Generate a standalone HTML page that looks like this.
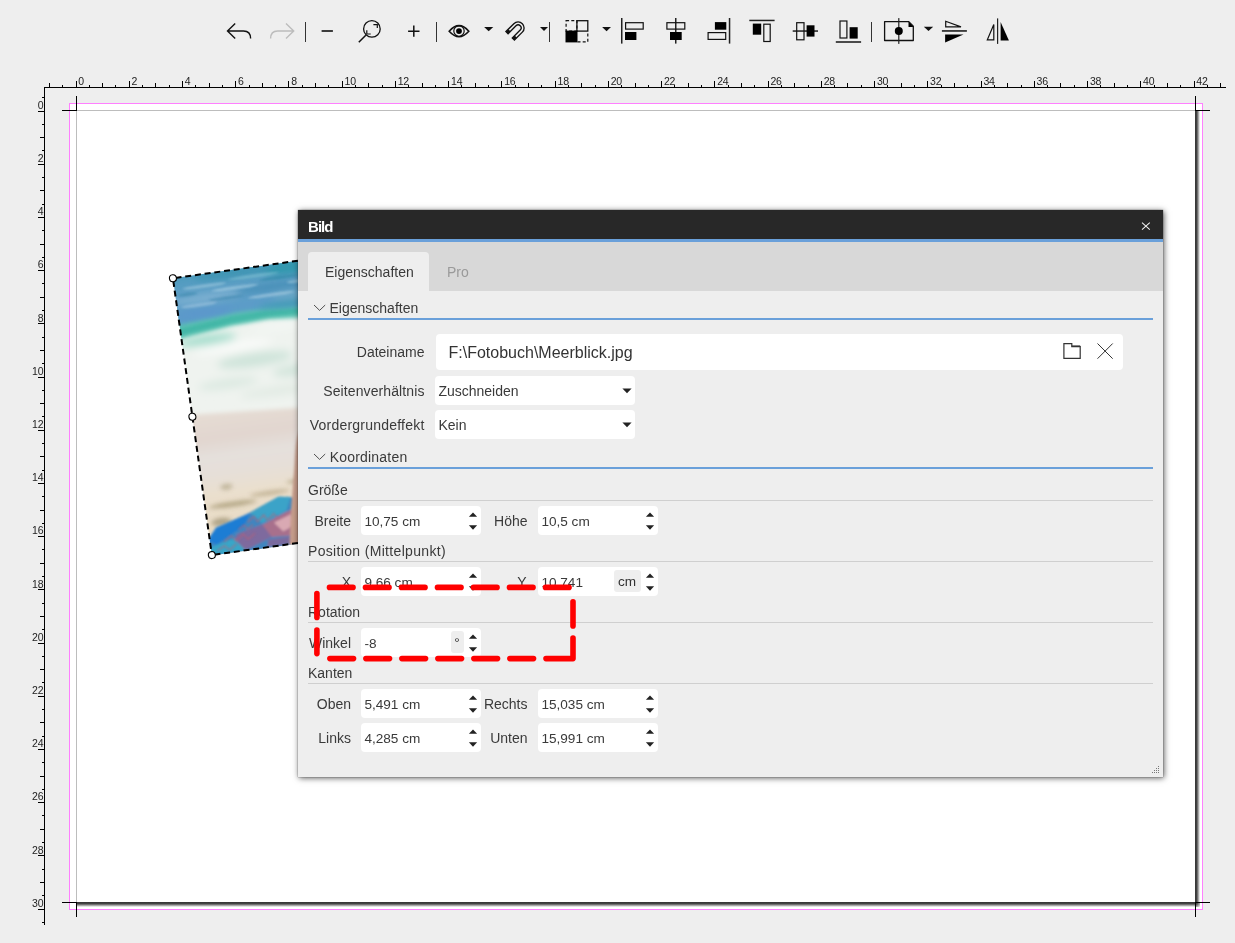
<!DOCTYPE html>
<html lang="de"><head><meta charset="utf-8"><title>Bild</title><style>
*{box-sizing:border-box;margin:0;padding:0}
html,body{width:1235px;height:943px;overflow:hidden;background:#eeeeee;font-family:"Liberation Sans",sans-serif;color:#333}
.abs{position:absolute}
#stage{position:absolute;left:0;top:0;width:1235px;height:943px;overflow:hidden;will-change:transform}
svg{position:absolute;left:0;top:0;overflow:visible}
.rl{font-family:"Liberation Sans",sans-serif;font-size:10.5px;fill:#222;letter-spacing:-0.2px}
#bleed{position:absolute;left:69px;top:103px;width:1134px;height:807px;background:#fff;border:1px solid #ff80ff}
#page{position:absolute;left:76px;top:110px;width:1119px;height:792px;background:#fff;border-left:1px solid #bdbdbd;border-top:1px solid #bdbdbd}
#shR{position:absolute;left:1195px;top:111px;width:5px;height:791px;background:linear-gradient(90deg,#333 0,#444 35%,#fff 100%)}
#shC{position:absolute;left:1195px;top:902px;width:5px;height:5px;background:radial-gradient(circle at 0 0,#333 0,#444 35%,#fff 100%)}
#shB{position:absolute;left:77px;top:902px;width:1118px;height:5px;background:linear-gradient(180deg,#333 0,#444 35%,#fff 100%)}
#dlg{position:absolute;left:298px;top:210px;width:865px;height:567px;background:#eeeeee;box-shadow:1px 1px 6px rgba(0,0,0,.65),0 0 1px rgba(0,0,0,.6)}
#dlg .title{position:absolute;left:0;top:0;width:865px;height:29px;background:#282828}
#dlg .title b{position:absolute;left:10px;top:8.6px;font-size:15px;line-height:16px;color:#fff;letter-spacing:-0.95px}
#dlg .blue{position:absolute;left:0;top:29px;width:865px;height:3px;background:#6aa0da}
#dlg .tabs{position:absolute;left:0;top:32px;width:865px;height:49px;background:#d8d8d8}
#dlg .tab{position:absolute;left:10px;top:42px;width:121px;height:39px;background:#eeeeee;border-radius:4px 4px 0 0}
.t14{font-size:14px;line-height:16px;white-space:nowrap;position:absolute;color:#3a3a3a}
.sec{position:absolute;left:10px;width:845px;height:2px;background:#6aa0da}
.grp{position:absolute;left:10px;width:845px;height:1px;background:#cfcfcf}
.inp{position:absolute;background:#fff;border-radius:4px}
.lab{position:absolute;font-size:14px;line-height:16px;text-align:right;white-space:nowrap;color:#3a3a3a}
.val{position:absolute;font-size:13.6px;line-height:16px;white-space:nowrap;color:#3a3a3a;left:3.4px}
.badge{position:absolute;background:#eeeeee;border-radius:3px;font-size:13.6px;line-height:16px;text-align:center;color:#333}
</style></head><body><div id="stage">
<div id="bleed"></div><div id="page"></div><div id="shR"></div><div id="shB"></div><div id="shC"></div>
<svg width="1235" height="943" viewBox="0 0 1235 943" shape-rendering="crispEdges"><rect x="44" y="87" width="1182" height="1" fill="#000"/><rect x="44" y="87" width="1" height="838" fill="#000"/><rect x="49" y="83" width="1" height="4" fill="#000"/><rect x="62" y="85" width="1" height="2" fill="#000"/><rect x="76" y="81" width="1" height="6" fill="#000"/><rect x="89" y="85" width="1" height="2" fill="#000"/><rect x="102" y="83" width="1" height="4" fill="#000"/><rect x="115" y="85" width="1" height="2" fill="#000"/><rect x="129" y="81" width="1" height="6" fill="#000"/><rect x="142" y="85" width="1" height="2" fill="#000"/><rect x="155" y="83" width="1" height="4" fill="#000"/><rect x="169" y="85" width="1" height="2" fill="#000"/><rect x="182" y="81" width="1" height="6" fill="#000"/><rect x="195" y="85" width="1" height="2" fill="#000"/><rect x="209" y="83" width="1" height="4" fill="#000"/><rect x="222" y="85" width="1" height="2" fill="#000"/><rect x="235" y="81" width="1" height="6" fill="#000"/><rect x="249" y="85" width="1" height="2" fill="#000"/><rect x="262" y="83" width="1" height="4" fill="#000"/><rect x="275" y="85" width="1" height="2" fill="#000"/><rect x="288" y="81" width="1" height="6" fill="#000"/><rect x="302" y="85" width="1" height="2" fill="#000"/><rect x="315" y="83" width="1" height="4" fill="#000"/><rect x="328" y="85" width="1" height="2" fill="#000"/><rect x="342" y="81" width="1" height="6" fill="#000"/><rect x="355" y="85" width="1" height="2" fill="#000"/><rect x="368" y="83" width="1" height="4" fill="#000"/><rect x="382" y="85" width="1" height="2" fill="#000"/><rect x="395" y="81" width="1" height="6" fill="#000"/><rect x="408" y="85" width="1" height="2" fill="#000"/><rect x="422" y="83" width="1" height="4" fill="#000"/><rect x="435" y="85" width="1" height="2" fill="#000"/><rect x="448" y="81" width="1" height="6" fill="#000"/><rect x="461" y="85" width="1" height="2" fill="#000"/><rect x="475" y="83" width="1" height="4" fill="#000"/><rect x="488" y="85" width="1" height="2" fill="#000"/><rect x="501" y="81" width="1" height="6" fill="#000"/><rect x="515" y="85" width="1" height="2" fill="#000"/><rect x="528" y="83" width="1" height="4" fill="#000"/><rect x="541" y="85" width="1" height="2" fill="#000"/><rect x="555" y="81" width="1" height="6" fill="#000"/><rect x="568" y="85" width="1" height="2" fill="#000"/><rect x="581" y="83" width="1" height="4" fill="#000"/><rect x="595" y="85" width="1" height="2" fill="#000"/><rect x="608" y="81" width="1" height="6" fill="#000"/><rect x="621" y="85" width="1" height="2" fill="#000"/><rect x="635" y="83" width="1" height="4" fill="#000"/><rect x="648" y="85" width="1" height="2" fill="#000"/><rect x="661" y="81" width="1" height="6" fill="#000"/><rect x="674" y="85" width="1" height="2" fill="#000"/><rect x="688" y="83" width="1" height="4" fill="#000"/><rect x="701" y="85" width="1" height="2" fill="#000"/><rect x="714" y="81" width="1" height="6" fill="#000"/><rect x="728" y="85" width="1" height="2" fill="#000"/><rect x="741" y="83" width="1" height="4" fill="#000"/><rect x="754" y="85" width="1" height="2" fill="#000"/><rect x="768" y="81" width="1" height="6" fill="#000"/><rect x="781" y="85" width="1" height="2" fill="#000"/><rect x="794" y="83" width="1" height="4" fill="#000"/><rect x="808" y="85" width="1" height="2" fill="#000"/><rect x="821" y="81" width="1" height="6" fill="#000"/><rect x="834" y="85" width="1" height="2" fill="#000"/><rect x="847" y="83" width="1" height="4" fill="#000"/><rect x="861" y="85" width="1" height="2" fill="#000"/><rect x="874" y="81" width="1" height="6" fill="#000"/><rect x="887" y="85" width="1" height="2" fill="#000"/><rect x="901" y="83" width="1" height="4" fill="#000"/><rect x="914" y="85" width="1" height="2" fill="#000"/><rect x="927" y="81" width="1" height="6" fill="#000"/><rect x="941" y="85" width="1" height="2" fill="#000"/><rect x="954" y="83" width="1" height="4" fill="#000"/><rect x="967" y="85" width="1" height="2" fill="#000"/><rect x="981" y="81" width="1" height="6" fill="#000"/><rect x="994" y="85" width="1" height="2" fill="#000"/><rect x="1007" y="83" width="1" height="4" fill="#000"/><rect x="1021" y="85" width="1" height="2" fill="#000"/><rect x="1034" y="81" width="1" height="6" fill="#000"/><rect x="1047" y="85" width="1" height="2" fill="#000"/><rect x="1060" y="83" width="1" height="4" fill="#000"/><rect x="1074" y="85" width="1" height="2" fill="#000"/><rect x="1087" y="81" width="1" height="6" fill="#000"/><rect x="1100" y="85" width="1" height="2" fill="#000"/><rect x="1114" y="83" width="1" height="4" fill="#000"/><rect x="1127" y="85" width="1" height="2" fill="#000"/><rect x="1140" y="81" width="1" height="6" fill="#000"/><rect x="1154" y="85" width="1" height="2" fill="#000"/><rect x="1167" y="83" width="1" height="4" fill="#000"/><rect x="1180" y="85" width="1" height="2" fill="#000"/><rect x="1194" y="81" width="1" height="6" fill="#000"/><rect x="1207" y="85" width="1" height="2" fill="#000"/><rect x="1220" y="83" width="1" height="4" fill="#000"/><rect x="42" y="97" width="2" height="1" fill="#000"/><rect x="38" y="111" width="6" height="1" fill="#000"/><rect x="42" y="124" width="2" height="1" fill="#000"/><rect x="40" y="137" width="4" height="1" fill="#000"/><rect x="42" y="150" width="2" height="1" fill="#000"/><rect x="38" y="164" width="6" height="1" fill="#000"/><rect x="42" y="177" width="2" height="1" fill="#000"/><rect x="40" y="190" width="4" height="1" fill="#000"/><rect x="42" y="204" width="2" height="1" fill="#000"/><rect x="38" y="217" width="6" height="1" fill="#000"/><rect x="42" y="230" width="2" height="1" fill="#000"/><rect x="40" y="244" width="4" height="1" fill="#000"/><rect x="42" y="257" width="2" height="1" fill="#000"/><rect x="38" y="270" width="6" height="1" fill="#000"/><rect x="42" y="283" width="2" height="1" fill="#000"/><rect x="40" y="297" width="4" height="1" fill="#000"/><rect x="42" y="310" width="2" height="1" fill="#000"/><rect x="38" y="323" width="6" height="1" fill="#000"/><rect x="42" y="337" width="2" height="1" fill="#000"/><rect x="40" y="350" width="4" height="1" fill="#000"/><rect x="42" y="363" width="2" height="1" fill="#000"/><rect x="38" y="377" width="6" height="1" fill="#000"/><rect x="42" y="390" width="2" height="1" fill="#000"/><rect x="40" y="403" width="4" height="1" fill="#000"/><rect x="42" y="416" width="2" height="1" fill="#000"/><rect x="38" y="430" width="6" height="1" fill="#000"/><rect x="42" y="443" width="2" height="1" fill="#000"/><rect x="40" y="456" width="4" height="1" fill="#000"/><rect x="42" y="470" width="2" height="1" fill="#000"/><rect x="38" y="483" width="6" height="1" fill="#000"/><rect x="42" y="496" width="2" height="1" fill="#000"/><rect x="40" y="510" width="4" height="1" fill="#000"/><rect x="42" y="523" width="2" height="1" fill="#000"/><rect x="38" y="536" width="6" height="1" fill="#000"/><rect x="42" y="549" width="2" height="1" fill="#000"/><rect x="40" y="563" width="4" height="1" fill="#000"/><rect x="42" y="576" width="2" height="1" fill="#000"/><rect x="38" y="589" width="6" height="1" fill="#000"/><rect x="42" y="603" width="2" height="1" fill="#000"/><rect x="40" y="616" width="4" height="1" fill="#000"/><rect x="42" y="629" width="2" height="1" fill="#000"/><rect x="38" y="643" width="6" height="1" fill="#000"/><rect x="42" y="656" width="2" height="1" fill="#000"/><rect x="40" y="669" width="4" height="1" fill="#000"/><rect x="42" y="682" width="2" height="1" fill="#000"/><rect x="38" y="696" width="6" height="1" fill="#000"/><rect x="42" y="709" width="2" height="1" fill="#000"/><rect x="40" y="722" width="4" height="1" fill="#000"/><rect x="42" y="736" width="2" height="1" fill="#000"/><rect x="38" y="749" width="6" height="1" fill="#000"/><rect x="42" y="762" width="2" height="1" fill="#000"/><rect x="40" y="776" width="4" height="1" fill="#000"/><rect x="42" y="789" width="2" height="1" fill="#000"/><rect x="38" y="802" width="6" height="1" fill="#000"/><rect x="42" y="815" width="2" height="1" fill="#000"/><rect x="40" y="829" width="4" height="1" fill="#000"/><rect x="42" y="842" width="2" height="1" fill="#000"/><rect x="38" y="855" width="6" height="1" fill="#000"/><rect x="42" y="869" width="2" height="1" fill="#000"/><rect x="40" y="882" width="4" height="1" fill="#000"/><rect x="42" y="895" width="2" height="1" fill="#000"/><rect x="38" y="909" width="6" height="1" fill="#000"/><rect x="42" y="922" width="2" height="1" fill="#000"/><rect x="76" y="96" width="1" height="15" fill="#000"/><rect x="62" y="110" width="15" height="1" fill="#000"/><rect x="1195" y="96" width="1" height="15" fill="#000"/><rect x="1195" y="110" width="15" height="1" fill="#000"/><rect x="76" y="902" width="1" height="15" fill="#000"/><rect x="62" y="902" width="15" height="1" fill="#000"/><rect x="1195" y="902" width="1" height="15" fill="#000"/><rect x="1195" y="902" width="15" height="1" fill="#000"/></svg>
<svg width="1235" height="943" viewBox="0 0 1235 943"><text class="rl" x="78.3" y="85">0</text><text class="rl" x="131.5" y="85">2</text><text class="rl" x="184.8" y="85">4</text><text class="rl" x="238.0" y="85">6</text><text class="rl" x="291.3" y="85">8</text><text class="rl" x="344.5" y="85">10</text><text class="rl" x="397.7" y="85">12</text><text class="rl" x="451.0" y="85">14</text><text class="rl" x="504.2" y="85">16</text><text class="rl" x="557.5" y="85">18</text><text class="rl" x="610.7" y="85">20</text><text class="rl" x="663.9" y="85">22</text><text class="rl" x="717.2" y="85">24</text><text class="rl" x="770.4" y="85">26</text><text class="rl" x="823.7" y="85">28</text><text class="rl" x="876.9" y="85">30</text><text class="rl" x="930.1" y="85">32</text><text class="rl" x="983.4" y="85">34</text><text class="rl" x="1036.6" y="85">36</text><text class="rl" x="1089.9" y="85">38</text><text class="rl" x="1143.1" y="85">40</text><text class="rl" x="1196.3" y="85">42</text><text class="rl" x="43.3" y="108.8" text-anchor="end">0</text><text class="rl" x="43.3" y="162.0" text-anchor="end">2</text><text class="rl" x="43.3" y="215.2" text-anchor="end">4</text><text class="rl" x="43.3" y="268.4" text-anchor="end">6</text><text class="rl" x="43.3" y="321.6" text-anchor="end">8</text><text class="rl" x="43.3" y="374.8" text-anchor="end">10</text><text class="rl" x="43.3" y="428.0" text-anchor="end">12</text><text class="rl" x="43.3" y="481.2" text-anchor="end">14</text><text class="rl" x="43.3" y="534.4" text-anchor="end">16</text><text class="rl" x="43.3" y="587.6" text-anchor="end">18</text><text class="rl" x="43.3" y="640.8" text-anchor="end">20</text><text class="rl" x="43.3" y="694.0" text-anchor="end">22</text><text class="rl" x="43.3" y="747.2" text-anchor="end">24</text><text class="rl" x="43.3" y="800.4" text-anchor="end">26</text><text class="rl" x="43.3" y="853.6" text-anchor="end">28</text><text class="rl" x="43.3" y="906.8" text-anchor="end">30</text></svg>
<svg width="1235" height="60" viewBox="0 0 1235 60" fill="none" stroke="#111" stroke-width="1.4"><path d="M235.2 23.6 L227.5 31 L235.2 38.4 M227.8 31 H243.5 Q250.6 31 250.6 38.6" stroke-linecap="butt" stroke-linejoin="miter"/><path d="M286 23.6 L293.7 31 L286 38.4 M293.4 31 H277.7 Q270.6 31 270.6 38.6" stroke="#bcbcbc"/><rect x="305" y="22" width="1" height="20" fill="#333" stroke="none" shape-rendering="crispEdges"/><rect x="436" y="22" width="1" height="20" fill="#333" stroke="none" shape-rendering="crispEdges"/><rect x="549" y="22" width="1" height="20" fill="#333" stroke="none" shape-rendering="crispEdges"/><rect x="871" y="22" width="1" height="20" fill="#333" stroke="none" shape-rendering="crispEdges"/><rect x="321.6" y="30.2" width="11.3" height="1.6" fill="#111" stroke="none"/><circle cx="371.9" cy="28.9" r="8.3" stroke-width="1.3"/><path d="M365.8 35.2 L358.8 42.3" stroke-width="1.5"/><path d="M373.4 24.6 H377.3 V27.9 M366.8 30.3 V34 H370.7" stroke-width="1.2"/><path d="M408.1 31.2 H419.5 M413.8 25.5 V36.8" stroke-width="1.5"/><path d="M449.2 31.2 Q459 20 468.8 31.2 Q459 42.2 449.2 31.2 Z" stroke-width="1.6" stroke-linejoin="miter"/><circle cx="459" cy="31.1" r="5.2" stroke-width="1.2"/><circle cx="459" cy="31.1" r="2.9" fill="#000" stroke="none"/><path d="M484.1 27 H493.3 L488.70000000000005 31.3 Z" fill="#111" stroke="none"/><path d="M540 27 H548 L544.0 31.1 Z" fill="#111" stroke="none"/><path d="M602.1 27 H611 L606.55 31.3 Z" fill="#111" stroke="none"/><path d="M923.8 26.8 H933.2 L928.5 31.1 Z" fill="#111" stroke="none"/><g transform="translate(518.1 27.9) rotate(45)"><path d="M-6.0 11.2 V0 A6.0 6.0 0 0 1 6.0 0 V11.2 H3.0 V0 A3.0 3.0 0 0 0 -3.0 0 V11.2 Z" stroke-width="1.35"/><rect x="-6.0" y="7.799999999999999" width="3.0" height="3.4" fill="#111" stroke="none"/><rect x="3.0" y="7.799999999999999" width="3.0" height="3.4" fill="#111" stroke="none"/></g><rect x="566.1" y="20.7" width="10.8" height="10.4" stroke-width="1.2" stroke-dasharray="3 2.2"/><rect x="576.9" y="20.7" width="10.9" height="10.4" stroke-width="1.3"/><rect x="565.5" y="30.6" width="12" height="11.8" fill="#000" stroke="none"/><path d="M577.5 41.8 H587.8 V31.5" stroke-width="1.2" stroke-dasharray="3 2.2"/><rect x="621" y="18" width="1.5" height="25.6" fill="#222" stroke="none"/><rect x="625.6" y="22.7" width="17.6" height="6.4" stroke-width="1.2"/><rect x="625" y="32" width="11.4" height="8" fill="#000" stroke="none"/><rect x="675" y="18" width="1.5" height="25.6" fill="#222" stroke="none"/><rect x="666.9" y="22.7" width="17.9" height="6.4" stroke-width="1.2"/><rect x="670" y="32" width="11.7" height="8" fill="#000" stroke="none"/><rect x="728.8" y="18" width="1.5" height="25.6" fill="#222" stroke="none"/><rect x="714.9" y="22.1" width="11.4" height="7.6" fill="#000" stroke="none"/><rect x="708.1" y="32.6" width="17.6" height="6.8" stroke-width="1.2"/><rect x="749.3" y="19.7" width="25.3" height="1.5" fill="#222" stroke="none"/><rect x="752.8" y="23.6" width="8.4" height="11.1" fill="#000" stroke="none"/><rect x="763.8" y="24.2" width="6.4" height="17.3" stroke-width="1.2"/><rect x="792.7" y="30.3" width="25.3" height="1.5" fill="#222" stroke="none"/><rect x="796.7" y="22.7" width="7.3" height="17.1" stroke-width="1.2"/><rect x="806.6" y="25.3" width="7.9" height="11.3" fill="#000" stroke="none"/><rect x="835.8" y="41.2" width="25.3" height="1.6" fill="#222" stroke="none"/><rect x="840" y="21" width="6.9" height="17" stroke-width="1.2"/><rect x="849.6" y="27.2" width="8.1" height="11.4" fill="#000" stroke="none"/><path d="M884.6 21.6 H908.8 L913.3 26.1 V40.5 H884.6 Z" stroke-width="1.3" stroke-linejoin="round"/><path d="M908.5 21.6 V26.9 H913.6 Z" fill="#000" stroke="none"/><rect x="898.2" y="18.1" width="1.2" height="25.8" fill="#222" stroke="none"/><circle cx="898.8" cy="31" r="4" fill="#000" stroke="none"/><path d="M945.7 21.3 V26.9 H961 Z" stroke-width="1.2"/><rect x="941.9" y="30.2" width="25" height="1.5" fill="#111" stroke="none"/><path d="M945.1 34.6 H963.5 L945.1 42.4 Z" fill="#000" stroke="none"/><rect x="997" y="18.4" width="1.2" height="25.5" fill="#222" stroke="none"/><path d="M993.8 24.5 V39.8 H987.3 Z" stroke-width="1.2"/><path d="M1000.6 21.9 V40.4 H1008.9 Z" fill="#000" stroke="none"/></svg>
<div style="position:absolute;left:191.10px;top:256.95px;width:286.2px;height:279.5px;transform:rotate(-8deg);transform-origin:50% 50%"><svg width="286.2" height="279.5" viewBox="0 0 286.2 279.5" style="overflow:hidden"><defs>
<linearGradient id="sea" x1="0" y1="0" x2="0" y2="1">
<stop offset="0" stop-color="#4598b9"/><stop offset="0.45" stop-color="#5d9fc6"/><stop offset="1" stop-color="#5a9bc9"/>
</linearGradient>
<linearGradient id="sand" x1="0" y1="0" x2="0" y2="1">
<stop offset="0" stop-color="#e6dcd4"/><stop offset="0.18" stop-color="#e1d6cf"/><stop offset="0.30" stop-color="#e5e0dc"/>
<stop offset="0.42" stop-color="#e6dfd8"/><stop offset="0.55" stop-color="#eadfcd"/><stop offset="0.8" stop-color="#e8dbc3"/><stop offset="1" stop-color="#dccdb0"/>
</linearGradient>
<filter id="b2" x="-20%" y="-20%" width="140%" height="140%"><feGaussianBlur stdDeviation="2"/></filter>
<filter id="b3" x="-20%" y="-20%" width="140%" height="140%"><feGaussianBlur stdDeviation="3"/></filter>
<filter id="b4" x="-30%" y="-30%" width="160%" height="160%"><feGaussianBlur stdDeviation="4"/></filter>
<filter id="b1" x="-20%" y="-20%" width="140%" height="140%"><feGaussianBlur stdDeviation="0.8"/></filter>
</defs><rect width="286.2" height="279.5" fill="#eff3ef"/><path d="M-10 137 L110 146 L296.2 150 V289.5 H-10 Z" fill="url(#sand)" filter="url(#b2)"/><path d="M-10 30 H296.2 V58 L116 57 L89 54 L52 55 L-10 62 Z" fill="#5cc4b2" filter="url(#b2)"/><path d="M-10 52 L52 46 L89 45 L130 47 V53 L89 51 L52 52 L-10 60 Z" fill="#3fb5a6" filter="url(#b2)"/><path d="M-10 -10 H296.2 V44 L116 45 L89 43 L52 43 L-10 48 Z" fill="url(#sea)" filter="url(#b2)"/><g filter="url(#b3)"><ellipse cx="125" cy="5" rx="40" ry="7" fill="#3198ae"/><ellipse cx="60" cy="3" rx="40" ry="5" fill="#3f95b4"/><ellipse cx="30" cy="24" rx="36" ry="5" fill="#7aafd0"/><ellipse cx="100" cy="22" rx="40" ry="4" fill="#4a90b8"/><ellipse cx="25" cy="38" rx="30" ry="4" fill="#5b97cc"/><ellipse cx="120" cy="32" rx="25" ry="4" fill="#6aa8c8"/><ellipse cx="110" cy="41" rx="30" ry="3" fill="#3f9cb4"/></g><g filter="url(#b1)" opacity="0.7"><ellipse cx="30" cy="12" rx="22" ry="1.6" fill="#9cc7dd"/><ellipse cx="80" cy="9" rx="26" ry="1.5" fill="#7fbfd2"/><ellipse cx="60" cy="18" rx="24" ry="1.6" fill="#a4cce2"/><ellipse cx="22" cy="30" rx="18" ry="1.6" fill="#9cc3de"/><ellipse cx="105" cy="14" rx="20" ry="1.4" fill="#2f88a6"/><ellipse cx="50" cy="27" rx="18" ry="1.4" fill="#3f89b0"/><ellipse cx="95" cy="30" rx="24" ry="1.6" fill="#a6cbe0"/><ellipse cx="130" cy="20" rx="18" ry="1.6" fill="#9ec8dc"/><ellipse cx="12" cy="18" rx="10" ry="1.5" fill="#3c88ad"/></g><g filter="url(#b4)"><ellipse cx="25" cy="66" rx="30" ry="5" fill="#9fdcca"/><ellipse cx="100" cy="62" rx="30" ry="3" fill="#f4f8f5"/><ellipse cx="70" cy="92" rx="38" ry="7" fill="#cfe4da"/><ellipse cx="115" cy="108" rx="30" ry="6" fill="#d3e5dc"/><ellipse cx="40" cy="112" rx="30" ry="5" fill="#dbe9e1"/><ellipse cx="90" cy="126" rx="40" ry="5" fill="#e2ebe4"/><ellipse cx="50" cy="76" rx="40" ry="5" fill="#f9fbf9"/></g><g filter="url(#b2)" opacity="0.75"><ellipse cx="28" cy="232" rx="24" ry="2.6" fill="#a3956f"/><ellipse cx="66" cy="226" rx="20" ry="2.2" fill="#b5a684"/><ellipse cx="100" cy="218" rx="16" ry="2.2" fill="#ab9d7c"/><ellipse cx="14" cy="248" rx="10" ry="4" fill="#9c9273"/><ellipse cx="24" cy="214" rx="6" ry="3" fill="#b5a98c"/></g><g filter="url(#b1)"><path d="M-2 264 L8 253 L40 244 L74 231 L86 233 L104 240 L160 242 L286.2 244 V284.5 H-2 Z" fill="#3f86c0"/><path d="M-2 264 L8 253 L44 243 L36 255 L6 270 Z" fill="#1f7dd4"/><path d="M44 243 L74 231 L86 233 L80 246 L54 255 Z" fill="#3aa3c8"/><path d="M50 258 L80 247 L104 242 L116 262 L92 272 L62 270 Z" fill="#a8708c"/><path d="M66 256 L84 250 L90 260 L74 266 Z" fill="#d9a9b3"/><path d="M28 262 L54 256 L62 270 L34 279.5 L20 274 Z" fill="#7e6a9e"/><path d="M86 250 L102 246 L106 258 L92 260 Z" fill="#3b79b4"/><path d="M-2 272 L24 266 L34 279.5 L-2 279.5 Z" fill="#38a6c8"/><path d="M100 268 L134 258 L134 279.5 L90 279.5 Z" fill="#2fb1cf"/><path d="M58 272 L92 272 L88 279.5 L56 279.5 Z" fill="#7a6a9e"/></g><g stroke="#c25f70" stroke-width="1.1" fill="none" opacity="0.75" filter="url(#b1)"><path d="M40 252 l7 -5 l3 6 l7 -6 l3 6 l7 -6 l3 5 M14 268 l8 -5 l4 6 l8 -6 l4 6 l8 -5 M6 276 l8 -4 l4 5 l8 -5 M30 258 l6 -4 l3 5 l6 -4"/></g><path d="M106 166 C99 174 97 190 94 204 L85 244 L78 282 L160 282 L160 166 Z" fill="#c79e8c" filter="url(#b1)"/><path d="M112 170 C105 178 103 192 100 206 L91 246 L84 282 L160 282 L160 170 Z" fill="#b98c7a" filter="url(#b2)"/></svg><svg width="286.2" height="279.5" viewBox="0 0 286.2 279.5" style="overflow:visible"><g fill="none" stroke="#000" stroke-width="2" stroke-dasharray="6 3.8"><path d="M0 0 H286.2" stroke-dashoffset="-2.6"/><path d="M0 0 V279.5" stroke-dashoffset="-2.6"/><path d="M0 279.5 H286.2" stroke-dashoffset="-2.6"/><path d="M286.2 0 V279.5" stroke-dashoffset="-2.6"/></g><circle cx="0.0" cy="0.0" r="3.5" fill="#fff" stroke="#000" stroke-width="1.1"/><circle cx="143.1" cy="0.0" r="3.5" fill="#fff" stroke="#000" stroke-width="1.1"/><circle cx="286.2" cy="0.0" r="3.5" fill="#fff" stroke="#000" stroke-width="1.1"/><circle cx="0.0" cy="139.8" r="3.5" fill="#fff" stroke="#000" stroke-width="1.1"/><circle cx="286.2" cy="139.8" r="3.5" fill="#fff" stroke="#000" stroke-width="1.1"/><circle cx="0.0" cy="279.5" r="3.5" fill="#fff" stroke="#000" stroke-width="1.1"/><circle cx="143.1" cy="279.5" r="3.5" fill="#fff" stroke="#000" stroke-width="1.1"/><circle cx="286.2" cy="279.5" r="3.5" fill="#fff" stroke="#000" stroke-width="1.1"/></svg></div>
<div id="dlg"><div class="title"><b>Bild</b></div><svg width="12" height="12" viewBox="0 0 12 12" style="left:841.5px;top:9.5px"><path d="M2 2.6 L9.8 9.6 M9.8 2.6 L2 9.6" stroke="#f2f2f2" stroke-width="1.05" fill="none"/></svg><div class="blue"></div><div class="tabs"></div><div class="tab"></div><span class="t14" style="left:27px;top:54px">Eigenschaften</span><span class="t14" style="left:149px;top:54px;color:#9a9a9a">Pro</span><svg width="14" height="8" viewBox="0 0 14 8" style="left:14.5px;top:94.2px"><path d="M1 1 L6.6 6.4 L12.2 1" stroke="#505050" stroke-width="1" fill="none"/></svg><span class="t14" style="left:31.5px;top:90px">Eigenschaften</span><div class="sec" style="top:108px"></div><span class="lab" style="left:20px;width:106.5px;top:134px">Dateiname</span><div class="inp" style="left:138px;top:124px;width:687px;height:36px"><span style="position:absolute;left:12.5px;top:10.3px;font-size:16px;line-height:18px;white-space:nowrap;color:#333">F:\Fotobuch\Meerblick.jpg</span><svg width="20" height="18" viewBox="0 0 20 18" style="left:626px;top:8px"><path d="M1.9 1.7 H9.8 V4.6 H18.2 V16.4 H1.9 Z" fill="none" stroke="#333" stroke-width="1.2"/><path d="M9.8 4.2 H18.2" stroke="#333" stroke-width="1.6"/></svg><svg width="18" height="18" viewBox="0 0 18 18" style="left:660px;top:8px"><path d="M1.5 1.5 L16.7 16.7 M16.7 1.5 L1.5 16.7" stroke="#333" stroke-width="1" fill="none"/></svg></div><span class="lab" style="left:0px;width:126.5px;top:173px;letter-spacing:0.1px">Seitenverhältnis</span><div class="inp" style="left:137px;top:166px;width:200px;height:29px"><span class="val" style="top:7.3px;font-size:14px">Zuschneiden</span><svg width="10" height="6" viewBox="0 0 10 6" style="left:186.5px;top:12.0px"><path d="M0.4 0.4 H9.6 L5 5.2 Z" fill="#222"/></svg></div><span class="lab" style="left:0px;width:126.5px;top:206.7px;letter-spacing:0.22px">Vordergrundeffekt</span><div class="inp" style="left:137px;top:200px;width:200px;height:29px"><span class="val" style="top:7.3px;font-size:14px">Kein</span><svg width="10" height="6" viewBox="0 0 10 6" style="left:186.5px;top:12.0px"><path d="M0.4 0.4 H9.6 L5 5.2 Z" fill="#222"/></svg></div><svg width="14" height="8" viewBox="0 0 14 8" style="left:14.5px;top:243.2px"><path d="M1 1 L6.6 6.4 L12.2 1" stroke="#505050" stroke-width="1" fill="none"/></svg><span class="t14" style="left:31.7px;top:239px;letter-spacing:0.2px">Koordinaten</span><div class="sec" style="top:257px"></div><span class="t14" style="left:10px;top:272px">Größe</span><div class="grp" style="top:290px"></div><span class="lab" style="left:0;width:53px;top:303px">Breite</span><div class="inp" style="left:63px;top:296px;width:120px;height:29px"><span class="val" style="top:8.1px">10,75 cm</span><svg width="10" height="20" viewBox="0 0 10 20" style="left:106.5px;top:5px"><path d="M0.9 5.8 L5 1.4 L9.1 5.8 Z" fill="#222"/><path d="M0.9 14.3 L5 18.7 L9.1 14.3 Z" fill="#222"/></svg></div><span class="lab" style="left:180px;width:49.5px;top:303px">Höhe</span><div class="inp" style="left:240px;top:296px;width:120px;height:29px"><span class="val" style="top:8.1px">10,5 cm</span><svg width="10" height="20" viewBox="0 0 10 20" style="left:106.5px;top:5px"><path d="M0.9 5.8 L5 1.4 L9.1 5.8 Z" fill="#222"/><path d="M0.9 14.3 L5 18.7 L9.1 14.3 Z" fill="#222"/></svg></div><span class="t14" style="left:10px;top:333px;letter-spacing:0.33px">Position (Mittelpunkt)</span><div class="grp" style="top:351px"></div><span class="lab" style="left:0;width:53px;top:364px">X</span><div class="inp" style="left:63px;top:357px;width:120px;height:29px"><span class="val" style="top:8.1px">9,66 cm</span><svg width="10" height="20" viewBox="0 0 10 20" style="left:106.5px;top:5px"><path d="M0.9 5.8 L5 1.4 L9.1 5.8 Z" fill="#222"/><path d="M0.9 14.3 L5 18.7 L9.1 14.3 Z" fill="#222"/></svg></div><span class="lab" style="left:180px;width:48.5px;top:364px">Y</span><div class="inp" style="left:240px;top:357px;width:120px;height:29px"><span class="val" style="top:8.1px">10,741</span><span class="badge" style="left:76px;top:3px;width:27px;height:22px;padding-top:4px;text-indent:-1px">cm</span><svg width="10" height="20" viewBox="0 0 10 20" style="left:106.5px;top:5px"><path d="M0.9 5.8 L5 1.4 L9.1 5.8 Z" fill="#222"/><path d="M0.9 14.3 L5 18.7 L9.1 14.3 Z" fill="#222"/></svg></div><span class="t14" style="left:10px;top:394px">Rotation</span><div class="grp" style="top:412px"></div><span class="lab" style="left:0;width:53px;top:425px">Winkel</span><div class="inp" style="left:63px;top:418px;width:120px;height:29px"><span class="val" style="top:8.1px">-8</span><span class="badge" style="left:90px;top:3px;width:13px;height:22px;padding-top:4px;text-indent:-1px">°</span><svg width="10" height="20" viewBox="0 0 10 20" style="left:106.5px;top:5px"><path d="M0.9 5.8 L5 1.4 L9.1 5.8 Z" fill="#222"/><path d="M0.9 14.3 L5 18.7 L9.1 14.3 Z" fill="#222"/></svg></div><span class="t14" style="left:10px;top:455px">Kanten</span><div class="grp" style="top:473px"></div><span class="lab" style="left:0;width:53px;top:486px">Oben</span><div class="inp" style="left:63px;top:479px;width:120px;height:29px"><span class="val" style="top:8.1px">5,491 cm</span><svg width="10" height="20" viewBox="0 0 10 20" style="left:106.5px;top:5px"><path d="M0.9 5.8 L5 1.4 L9.1 5.8 Z" fill="#222"/><path d="M0.9 14.3 L5 18.7 L9.1 14.3 Z" fill="#222"/></svg></div><span class="lab" style="left:180px;width:49.5px;top:486px">Rechts</span><div class="inp" style="left:240px;top:479px;width:120px;height:29px"><span class="val" style="top:8.1px">15,035 cm</span><svg width="10" height="20" viewBox="0 0 10 20" style="left:106.5px;top:5px"><path d="M0.9 5.8 L5 1.4 L9.1 5.8 Z" fill="#222"/><path d="M0.9 14.3 L5 18.7 L9.1 14.3 Z" fill="#222"/></svg></div><span class="lab" style="left:0;width:53px;top:519.5px">Links</span><div class="inp" style="left:63px;top:513px;width:120px;height:29px"><span class="val" style="top:8.1px">4,285 cm</span><svg width="10" height="20" viewBox="0 0 10 20" style="left:106.5px;top:5px"><path d="M0.9 5.8 L5 1.4 L9.1 5.8 Z" fill="#222"/><path d="M0.9 14.3 L5 18.7 L9.1 14.3 Z" fill="#222"/></svg></div><span class="lab" style="left:180px;width:49.5px;top:519.5px">Unten</span><div class="inp" style="left:240px;top:513px;width:120px;height:29px"><span class="val" style="top:8.1px">15,991 cm</span><svg width="10" height="20" viewBox="0 0 10 20" style="left:106.5px;top:5px"><path d="M0.9 5.8 L5 1.4 L9.1 5.8 Z" fill="#222"/><path d="M0.9 14.3 L5 18.7 L9.1 14.3 Z" fill="#222"/></svg></div><svg width="12" height="12" viewBox="0 0 12 12" style="left:852px;top:554px" shape-rendering="crispEdges"><rect x="8" y="2" width="1" height="1" fill="#777"/><rect x="6" y="4" width="1" height="1" fill="#777"/><rect x="8" y="4" width="1" height="1" fill="#777"/><rect x="4" y="6" width="1" height="1" fill="#777"/><rect x="6" y="6" width="1" height="1" fill="#777"/><rect x="8" y="6" width="1" height="1" fill="#777"/><rect x="2" y="8" width="1" height="1" fill="#777"/><rect x="4" y="8" width="1" height="1" fill="#777"/><rect x="6" y="8" width="1" height="1" fill="#777"/><rect x="8" y="8" width="1" height="1" fill="#777"/></svg></div>
<svg width="1235" height="943" viewBox="0 0 1235 943" fill="none" stroke="#ff0000" stroke-width="5.6" stroke-linecap="round" stroke-linejoin="round"><path d="M329.5 587.4 H353.0"/><path d="M365.5 587.4 H389.0"/><path d="M401.5 587.4 H425.0"/><path d="M437.5 587.4 H461.0"/><path d="M473.5 587.4 H497.0"/><path d="M509.5 587.4 H533.0"/><path d="M545.5 587.4 H569.0"/><path d="M329.9 658.6 H353.5"/><path d="M365.9 658.6 H389.5"/><path d="M401.9 658.6 H425.5"/><path d="M437.9 658.6 H461.5"/><path d="M473.9 658.6 H497.5"/><path d="M509.9 658.6 H533.5"/><path d="M546 658.6 H573 V638"/><path d="M573 601.7 V625.9"/><path d="M316.9 593.6 V617.4"/><path d="M316.9 630.1 V653.6"/></svg>
</div></body></html>
